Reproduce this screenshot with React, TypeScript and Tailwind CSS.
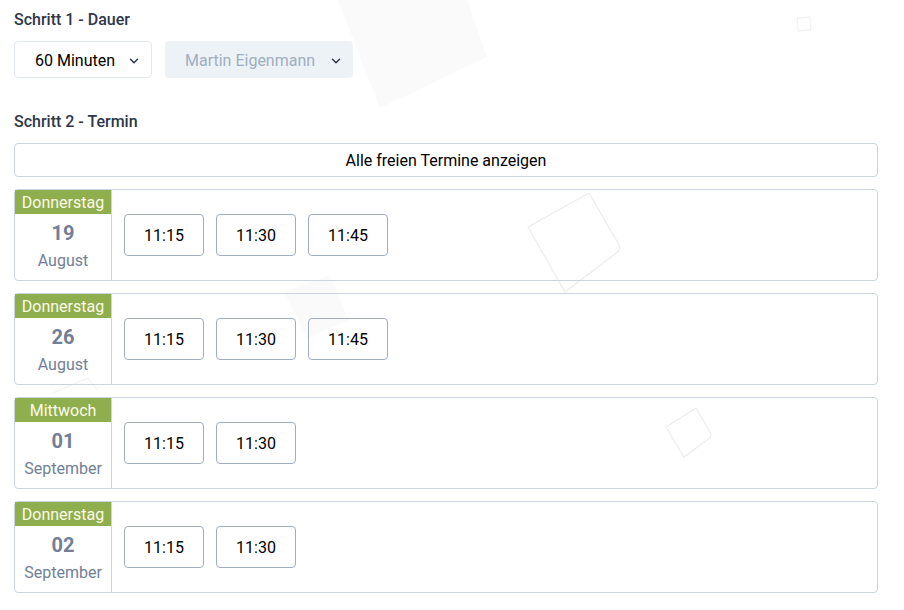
import { ChevronDown } from "lucide-react";

const DAYS = [
  { weekday: "Donnerstag", day: "19", month: "August", times: ["11:15", "11:30", "11:45"] },
  { weekday: "Donnerstag", day: "26", month: "August", times: ["11:15", "11:30", "11:45"] },
  { weekday: "Mittwoch", day: "01", month: "September", times: ["11:15", "11:30"] },
  { weekday: "Donnerstag", day: "02", month: "September", times: ["11:15", "11:30"] },
];

function Backdrop() {
  return (
    <svg className="absolute inset-0 w-full h-full pointer-events-none" viewBox="0 0 904 610" preserveAspectRatio="none">
      <polygon points="338,0 467,0 487,57 380,108" fill="#fafafa" />
      <polygon points="797,18 810,17 811,30 798,31" fill="none" stroke="#efefef" strokeWidth="1" />
      <path d="M528,227 L589,193 L618,243 Q622,250 615,254 L565,292 Z" fill="none" stroke="#ececec" strokeWidth="1.2" />
      <path d="M666,427 L696,408 L710,432 Q713,437 707,440 L684,457 Z" fill="none" stroke="#ececec" strokeWidth="1.2" />
      <polygon points="284,292 330,275 348,320 307,338" fill="#fafafa" />
      <polyline points="53,393 88,378 97,390" fill="none" stroke="#efefef" strokeWidth="1" />
    </svg>
  );
}

export default function App() {
  return (
    <div className="relative w-[904px] h-[610px] bg-white overflow-hidden" style={{ fontFamily: "Roboto, 'Liberation Sans', sans-serif" }}>
      <Backdrop />
      <div className="relative w-[892px] pl-[14px] pr-[14px] pt-[8px]">
        {/* Step 1 */}
        <h2 className="text-[16px] leading-6 font-medium text-[#2d3748]">Schritt 1 - Dauer</h2>
        <div className="flex gap-[13px] mt-[9px]">
          <div className="w-[138px] h-[37px] border border-[#e2e8f0] rounded bg-white flex items-center pl-5 pr-2.5 pt-[2px] justify-between">
            <span className="text-[16px] text-black">60 Minuten</span>
            <ChevronDown size={14} strokeWidth={2.5} className="text-[#2d3748]" />
          </div>
          <div className="w-[188px] h-[37px] rounded bg-[#edf2f7] flex items-center pl-5 pr-2.5 pt-[2px] justify-between">
            <span className="text-[16px] text-[#a0aec0]">Martin Eigenmann</span>
            <ChevronDown size={14} strokeWidth={2.5} className="text-[#2d3748]" />
          </div>
        </div>

        {/* Step 2 */}
        <h2 className="text-[16px] leading-6 font-medium text-[#2d3748] mt-[32px]">Schritt 2 - Termin</h2>
        <button className="mt-[9px] w-full h-[34px] border border-[#cbd5e0] rounded text-[16px] text-black bg-white pt-[2px]">
          Alle freien Termine anzeigen
        </button>

        <div className="mt-[12px] flex flex-col gap-3">
          {DAYS.map((d, i) => (
            <div key={i} className="h-[92px] border border-[#cbd5e0] rounded flex">
              <div className="w-[97px] border-r border-[#cbd5e0] flex flex-col items-center">
                <div className="w-full h-[24px] bg-[#8fae4e] text-[#fbfbe8] text-[16px] leading-[24px] pt-px text-center">
                  {d.weekday}
                </div>
                <div className="text-[20px] font-bold text-[#718096] leading-6 mt-[7px]">{d.day}</div>
                <div className="text-[16px] text-[#718096] leading-5 mt-[6px]">{d.month}</div>
              </div>
              <div className="flex items-center gap-3 pl-3">
                {d.times.map((t) => (
                  <button
                    key={t}
                    className="w-[80px] h-[42px] border border-[#a0aec0] rounded text-[16px] text-black bg-transparent pt-[2px]"
                  >
                    {t}
                  </button>
                ))}
              </div>
            </div>
          ))}
        </div>
      </div>
    </div>
  );
}
